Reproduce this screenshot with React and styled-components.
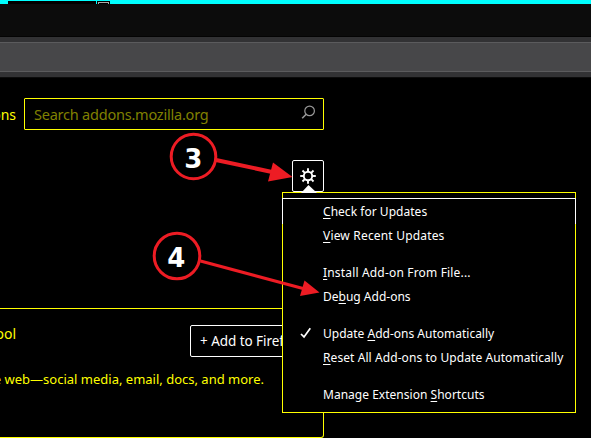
import React from "react";
import styled, { createGlobalStyle } from "styled-components";

const Global = createGlobalStyle`
  * { box-sizing: border-box; }
  body { margin: 0; background: #000; overflow: hidden; }
`;

const Screen = styled.div`
  position: relative;
  width: 591px;
  height: 438px;
  overflow: hidden;
  background: #000;
  color: #ff0;
  font-family: "Noto Sans", sans-serif;
`;

const TitleStrip = styled.div`
  display: flex;
  align-items: flex-end;
  gap: 1px;
  height: 4px;
  padding-left: 8px;
  background: #0ff;
`;

const TabTitle = styled.div`
  width: 88px;
  height: 3px;
  background: #000;
`;

const TabIcon = styled.svg`
  display: block;
  width: 13px;
  height: 3px;
`;

const TabBar = styled.div`
  height: 33px;
  background: #0c0c0c;
  border-bottom: 1px solid #040404;
`;

const NavBar = styled.div`
  height: 41px;
  padding: 5px 0;
  background: #323234;
  border-bottom: 1px solid #0c0c0c;
`;

const AddressField = styled.div`
  height: 30px;
  background: #474749;
  border: solid #5b5b5d;
  border-width: 1px 0;
`;

const SearchRow = styled.div`
  display: flex;
  align-items: center;
  width: 324px;
  height: 32px;
  margin-top: 20px;
`;

const SearchLabel = styled.div`
  display: flex;
  justify-content: flex-end;
  width: 24px;
  padding-right: 8px;
  font-size: 14px;
  white-space: nowrap;
`;

const SearchField = styled.div`
  display: flex;
  flex: 1;
  align-items: center;
  justify-content: space-between;
  height: 32px;
  padding: 0 7px 0 9px;
  border: 1px solid #ff0;
  border-radius: 1px;
  color: #808000;
  font-size: 14.5px;
  letter-spacing: -0.22px;
`;

const SearchIcon = styled.svg`
  width: 16px;
  height: 16px;
  margin-top: -4px;
`;

const ToolRow = styled.div`
  display: flex;
  justify-content: flex-end;
  width: 324px;
  margin-top: 30px;
`;

const GearButton = styled.button`
  display: flex;
  align-items: center;
  justify-content: center;
  width: 32px;
  height: 32px;
  padding: 0;
  background: #000;
  border: 1px solid #fff;
  border-radius: 2px;
`;

const Card = styled.section`
  width: 324px;
  height: 130px;
  margin-top: 116px;
  border: solid #ff0;
  border-width: 1px 1px 1px 0;
  border-radius: 0 3px 3px 0;
`;

const CardHeader = styled.div`
  display: flex;
  justify-content: space-between;
  height: 48px;
  padding-top: 16px;
`;

const CardTitle = styled.div`
  display: flex;
  justify-content: flex-end;
  width: 16px;
  font-size: 14px;
  line-height: 18px;
  white-space: nowrap;
`;

const AddButton = styled.button`
  width: 133px;
  height: 32px;
  padding: 0 0 0 9px;
  background: #000;
  border: 1px solid #fff;
  border-radius: 2px;
  color: #fff;
  font: 13.5px "Noto Sans", sans-serif;
  letter-spacing: -0.05px;
  text-align: left;
  white-space: nowrap;
`;

const CardText = styled.p`
  display: flex;
  justify-content: flex-end;
  width: 264px;
  margin: 13px 0 0;
  font-size: 13px;
  line-height: 18px;
  white-space: nowrap;
`;

const Menu = styled.div`
  position: absolute;
  left: 282px;
  top: 192px;
  width: 294px;
  height: 221px;
  padding-top: 5px;
  background: #000;
  border: 1px solid #ff0;
  color: #fff;
`;

const MenuEdge = styled.div`
  height: 26px;
  margin: 0 -1px -26px;
  border: solid #fff;
  border-width: 1px 1px 0;
`;

const MenuList = styled.div`
  display: flex;
  flex-direction: column;
  padding-top: 1px;
`;

const MenuItem = styled.div`
  display: flex;
  align-items: center;
  height: 24px;
  margin-bottom: ${(p) => (p.$groupEnd ? "13px" : "0")};
  font: 12px/15px "Noto Sans", sans-serif;
  letter-spacing: ${(p) => p.$spacing || 0}px;
  white-space: pre;
`;

const CheckCell = styled.span`
  display: flex;
  width: 40px;
  padding-left: 17px;
`;

const AccessKey = styled.span`
  text-decoration: underline;
  text-decoration-thickness: 1px;
  text-underline-offset: 2px;
  text-decoration-skip-ink: none;
`;

const Annotations = styled.svg`
  position: absolute;
  inset: 0;
  pointer-events: none;
`;

const StepNumber = styled.text`
  fill: #fff;
  font: 700 26px "DejaVu Sans", sans-serif;
  text-anchor: middle;
`;

const items = [
  { key: "C", after: "heck for Updates", spacing: 0.03 },
  { key: "V", after: "iew Recent Updates", groupEnd: true, spacing: 0.18 },
  { key: "I", after: "nstall Add-on From File...", spacing: 0.17 },
  { before: "De", key: "b", after: "ug Add-ons", groupEnd: true },
  { before: "Update ", key: "A", after: "dd-ons Automatically", checked: true },
  { key: "R", after: "eset All Add-ons to Update Automatically", groupEnd: true, spacing: 0.08 },
  { before: "Manage Extension ", key: "S", after: "hortcuts", spacing: 0.02 },
];

const teeth = [0, 45, 90, 135, 180, 225, 270, 315];

export default function App() {
  return (
    <Screen>
      <Global />
      <TitleStrip>
        <TabTitle />
        <TabIcon viewBox="0 0 13 3" shapeRendering="crispEdges">
          <path d="M0 0h13v3H0z" fill="#000" />
          <path d="M1.5 3V1.5h10V3" fill="none" stroke="#aaa" />
        </TabIcon>
      </TitleStrip>
      <TabBar />
      <NavBar>
        <AddressField />
      </NavBar>

      <SearchRow>
        <SearchLabel>ons</SearchLabel>
        <SearchField>
          <span>Search addons.mozilla.org</span>
          <SearchIcon viewBox="0 0 16 16" fill="none" stroke="#999" strokeWidth="1.2">
            <circle cx="9.6" cy="6.9" r="4.8" />
            <path d="M6.2 10.3 2.2 14.3" strokeWidth="1.6" />
          </SearchIcon>
        </SearchField>
      </SearchRow>

      <ToolRow>
        <GearButton aria-label="Tools">
          <svg width="16" height="16" viewBox="-8 -8 16 16" fill="none" stroke="#fff">
            <circle r="4.2" strokeWidth="1.9" />
            {teeth.map((angle) => (
              <path key={angle} d="M0-4.5V-7.8" strokeWidth="1.9" transform={`rotate(${angle})`} />
            ))}
          </svg>
        </GearButton>
      </ToolRow>

      <Card>
        <CardHeader>
          <CardTitle>ool</CardTitle>
          <AddButton>+ Add to Firefox</AddButton>
        </CardHeader>
        <CardText>e web—social media, email, docs, and more.</CardText>
      </Card>

      <Menu>
        <MenuEdge />
        <MenuList>
          {items.map((item) => (
            <MenuItem key={item.after} $groupEnd={item.groupEnd} $spacing={item.spacing}>
              <CheckCell>
                {item.checked && (
                  <svg width="12" height="12" viewBox="0 0 12 12" fill="none" stroke="#fff" strokeWidth="1.7">
                    <path d="M1 7 4 9.9 10.3 1.2" />
                  </svg>
                )}
              </CheckCell>
              <span>
                {item.before}
                <AccessKey>{item.key}</AccessKey>
                {item.after}
              </span>
            </MenuItem>
          ))}
        </MenuList>
      </Menu>

      <Annotations width="591" height="438" viewBox="0 0 591 438">
        <path d="M301 193 308.5 185 317 193z" fill="#fff" />
        <g fill="none" stroke="#ed1c24" strokeWidth="3">
          <circle cx="193.5" cy="156.5" r="22.3" />
          <circle cx="177" cy="256" r="22.8" />
          <path d="M216 160 272 172" strokeWidth="4" />
          <path d="M200.5 261 303 288.5" />
        </g>
        <path d="M273 162.5 292.5 177 268 181.5z" fill="#ed1c24" />
        <path d="M304.5 280.5 319.5 292.5 300 296z" fill="#ed1c24" />
        <StepNumber x="193.3" y="167.5">3</StepNumber>
        <StepNumber x="176.3" y="266.5">4</StepNumber>
      </Annotations>
    </Screen>
  );
}
